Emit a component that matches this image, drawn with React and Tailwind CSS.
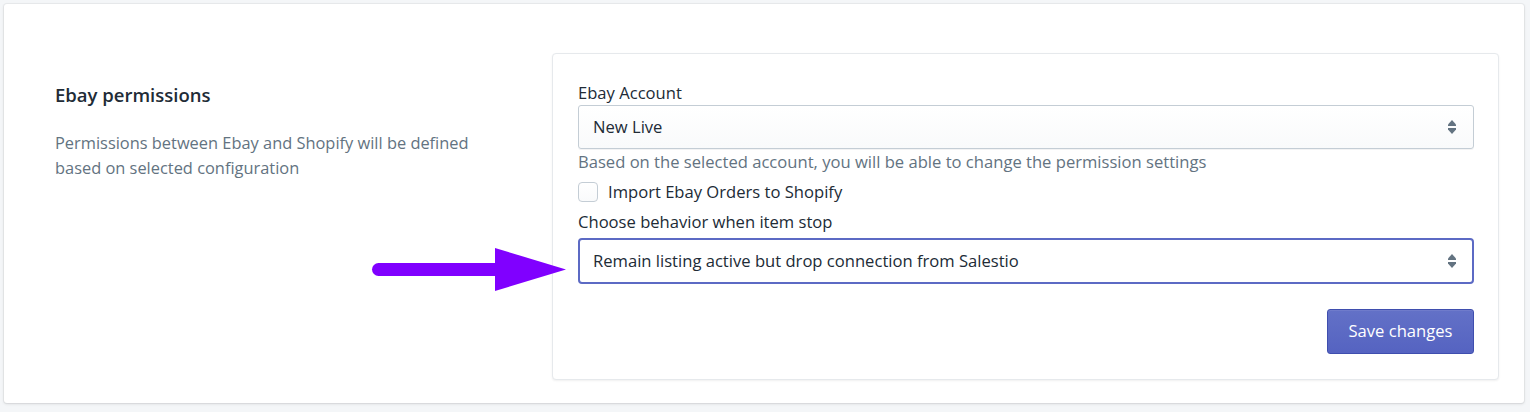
import React, { useState } from "react";

const SelectArrows = () => (
  <svg width="8" height="14" viewBox="0 0 8 14" className="shrink-0">
    <path d="M4 0 L8 4.5 L8 6 L0 6 L0 4.5 Z" fill="#637381" />
    <path d="M0 8 L8 8 L8 9.5 L4 14 L0 9.5 Z" fill="#637381" />
  </svg>
);

const PointerArrow = () => (
  <svg
    width="200"
    height="46"
    viewBox="0 0 200 46"
    className="absolute left-[370px] top-[246px] pointer-events-none"
  >
    <line x1="8.5" y1="23.5" x2="130" y2="23.5" stroke="#8000ff" strokeWidth="13" strokeLinecap="round" />
    <path d="M125 2 L196 23.5 L125 45 Z" fill="#8000ff" />
  </svg>
);

const App = () => {
  const [importOrders, setImportOrders] = useState(false);

  return (
    <div
      className="relative min-h-screen bg-[#f4f6f8] p-[4px] text-[#212b36]"
      style={{ fontFamily: "'Open Sans', sans-serif" }}
    >
      <div className="flex w-[1520px] h-[399px] bg-white rounded-[3px] shadow-[0_0_0_1px_rgba(63,63,68,0.05),0_1px_3px_0_rgba(63,63,68,0.15)] pl-[51px] pr-[24px] pt-[49px]">
        <div className="w-[497px] shrink-0 pt-[30px] pr-[57px]">
          <h2 className="text-[18.5px] leading-[24px] font-semibold">Ebay permissions</h2>
          <p className="mt-[23px] text-[16.4px] leading-[25px] text-[#637381]">
            Permissions between Ebay and Shopify will be defined based on selected configuration
          </p>
        </div>

        <div className="w-[947px] h-[327px] bg-white border border-[#e6e9ec] rounded-[4px] shadow-[0_1px_2px_0_rgba(63,63,68,0.08)] pl-[25px] pr-[24px] pt-[27px] text-[16.6px]">
          <label className="block leading-[24px]">Ebay Account</label>
          <div className="flex items-center justify-between h-[44px] border border-[#c4cdd5] rounded-[3px] bg-gradient-to-b from-white to-[#f9fafb] pl-[14px] pr-[17px] shadow-[0_1px_0_0_rgba(22,29,37,0.05)]">
            <span>New Live</span>
            <SelectArrows />
          </div>
          <p className="mt-[1px] leading-[24px] text-[#637381]">
            Based on the selected account, you will be able to change the permission settings
          </p>
          <label className="mt-[6px] flex items-center gap-[10px] leading-[24px] cursor-pointer">
            <input
              type="checkbox"
              checked={importOrders}
              onChange={() => setImportOrders(!importOrders)}
              className="appearance-none w-[20px] h-[20px] border border-[#c4cdd5] rounded-[4px] bg-gradient-to-b from-white to-[#f9fafb] checked:bg-[#5c6ac4]"
            />
            <span>Import Ebay Orders to Shopify</span>
          </label>
          <label className="mt-[6px] block leading-[24px]">Choose behavior when item stop</label>
          <div className="mt-[4px] flex items-center justify-between h-[46px] border-2 border-[#5c6ac4] rounded-[4px] bg-white pl-[13px] pr-[16px]">
            <span>Remain listing active but drop connection from Salestio</span>
            <SelectArrows />
          </div>
          <div className="mt-[25px] flex justify-end">
            <button className="h-[45px] w-[147px] rounded-[3px] border border-[#3f4eae] bg-gradient-to-b from-[#6371c7] to-[#5563c1] text-white shadow-[inset_0_1px_0_0_#6f7bcb]">
              Save changes
            </button>
          </div>
        </div>
      </div>
      <PointerArrow />
    </div>
  );
};

export default App;
